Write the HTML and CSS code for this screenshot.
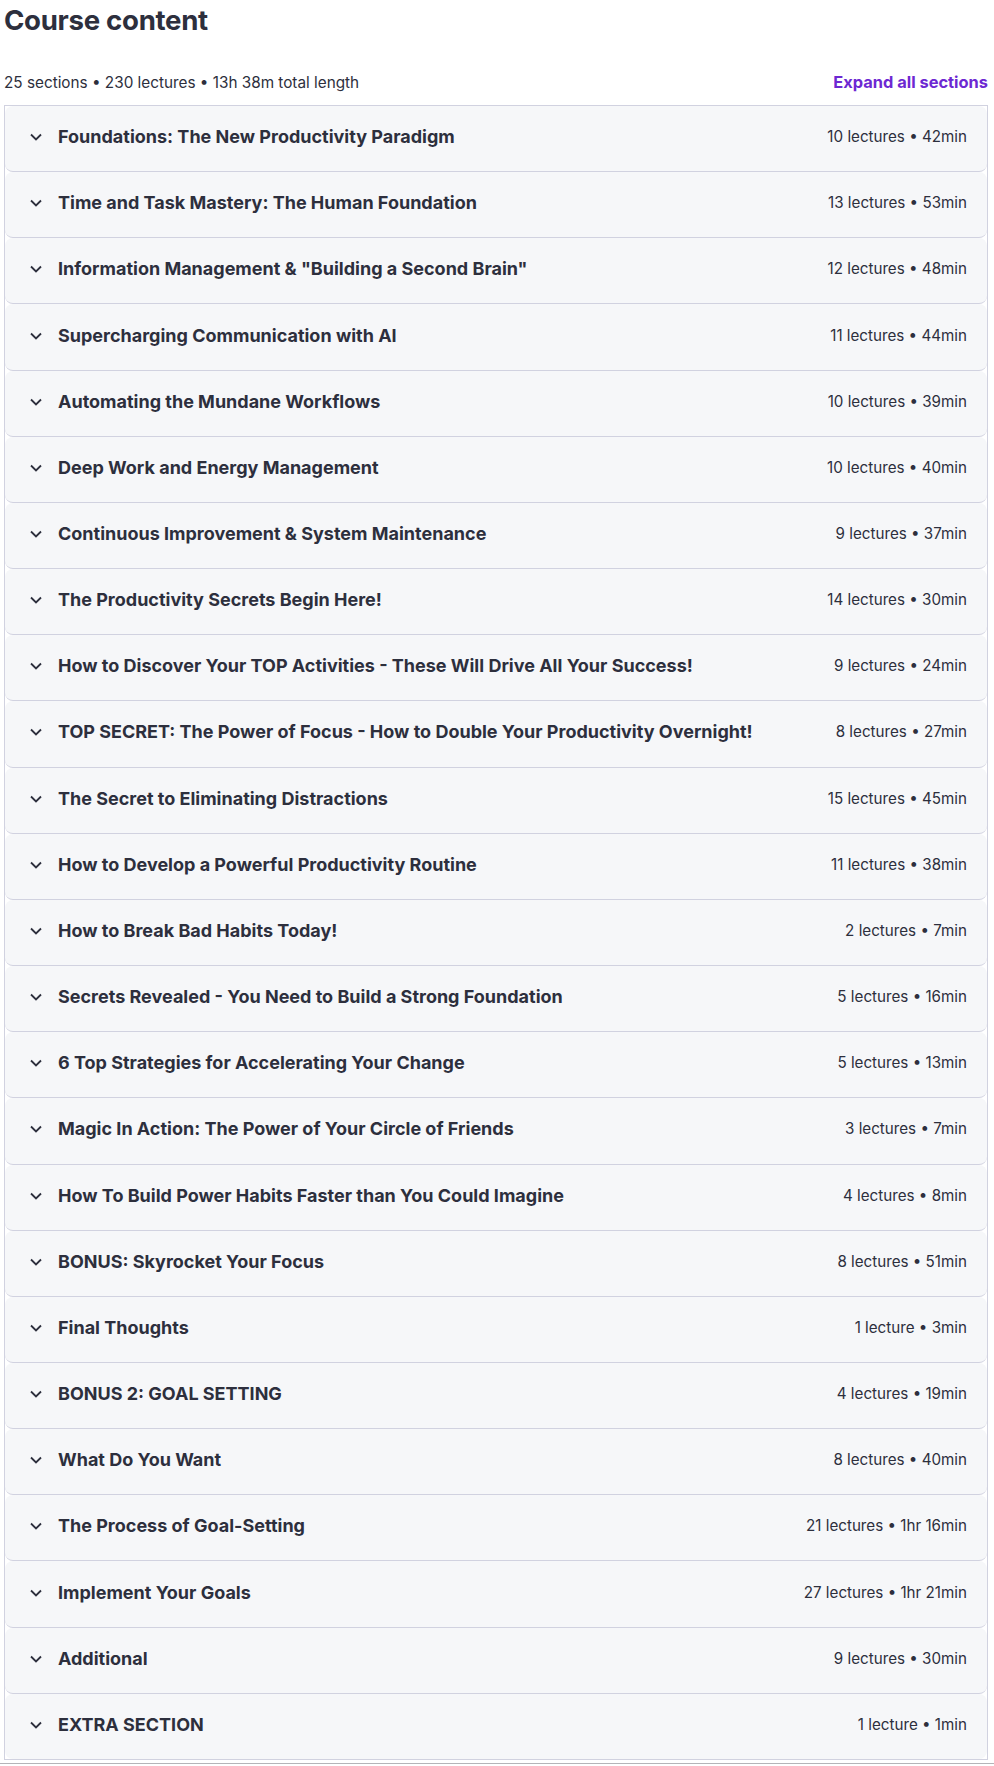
FILE: index.html
```html
<!DOCTYPE html>
<html>
  <head>
    <title>Course content</title>
    <link rel="stylesheet" href="styles.css">
  </head>
  <body>
    <div class="page">
      <h2 class="heading">Course content</h2>
      <div class="summary">
        <span>25 sections • 230 lectures • 13h 38m total length</span>
        <a class="expand-link" href="#">Expand all sections</a>
      </div>
      <div class="sections" id="sections"></div>
    </div>
    <div class="page-rule"></div>

    <script>
      // Section titles and their lecture counts / lengths
      var sections = [
        ["Foundations: The New Productivity Paradigm", "10 lectures • 42min"],
        ["Time and Task Mastery: The Human Foundation", "13 lectures • 53min"],
        ["Information Management & \"Building a Second Brain\"", "12 lectures • 48min"],
        ["Supercharging Communication with AI", "11 lectures • 44min"],
        ["Automating the Mundane Workflows", "10 lectures • 39min"],
        ["Deep Work and Energy Management", "10 lectures • 40min"],
        ["Continuous Improvement & System Maintenance", "9 lectures • 37min"],
        ["The Productivity Secrets Begin Here!", "14 lectures • 30min"],
        ["How to Discover Your TOP Activities - These Will Drive All Your Success!", "9 lectures • 24min"],
        ["TOP SECRET: The Power of Focus - How to Double Your Productivity Overnight!", "8 lectures • 27min"],
        ["The Secret to Eliminating Distractions", "15 lectures • 45min"],
        ["How to Develop a Powerful Productivity Routine", "11 lectures • 38min"],
        ["How to Break Bad Habits Today!", "2 lectures • 7min"],
        ["Secrets Revealed - You Need to Build a Strong Foundation", "5 lectures • 16min"],
        ["6 Top Strategies for Accelerating Your Change", "5 lectures • 13min"],
        ["Magic In Action: The Power of Your Circle of Friends", "3 lectures • 7min"],
        ["How To Build Power Habits Faster than You Could Imagine", "4 lectures • 8min"],
        ["BONUS: Skyrocket Your Focus", "8 lectures • 51min"],
        ["Final Thoughts", "1 lecture • 3min"],
        ["BONUS 2: GOAL SETTING", "4 lectures • 19min"],
        ["What Do You Want", "8 lectures • 40min"],
        ["The Process of Goal-Setting", "21 lectures • 1hr 16min"],
        ["Implement Your Goals", "27 lectures • 1hr 21min"],
        ["Additional", "9 lectures • 30min"],
        ["EXTRA SECTION", "1 lecture • 1min"]
      ];

      var list = document.getElementById("sections");
      var chevron =
        '<svg class="chevron" width="12" height="8" viewBox="0 0 12 8">' +
        '<path d="M1 1.5l5 5 5-5" fill="none" stroke="currentColor" stroke-width="1.8"/></svg>';

      sections.forEach(function (s) {
        var row = document.createElement("div");
        row.className = "section-row";
        row.innerHTML =
          chevron +
          '<span class="section-title"></span><span class="section-meta"></span>';
        row.querySelector(".section-title").textContent = s[0];
        row.querySelector(".section-meta").textContent = s[1];
        list.appendChild(row);
      });
    </script>
  </body>
</html>
```

FILE: styles.css
```css
body {
  margin: 0;
  font-family: Inter, "Noto Sans", Arial, sans-serif;
  color: #2d2f3d;
  background: #fff;
}
.page {
  padding: 0 6px 0 4px;
}
.heading {
  margin: 0;
  padding-top: 2px;
  font-size: 27.6px;
  font-weight: 700;
  line-height: 36px;
  letter-spacing: -0.3px;
}
.summary {
  display: flex;
  justify-content: space-between;
  align-items: center;
  margin-top: 31px;
  height: 26px;
  padding-bottom: 3px;
  font-size: 15.3px;
}
.expand-link {
  color: #6d28d2;
  font-size: 16.4px;
  font-weight: 700;
  text-decoration: none;
}
.sections {
  margin-top: 7px;
  border: 1px solid #d1d2e0;
}
.section-row {
  display: flex;
  align-items: center;
  box-sizing: border-box;
  height: 66.16px;
  padding: 0 20px 4px 25px;
  background: #f6f7f9;
  border-radius: 8px;
  border-bottom: 1px solid #d1d2e0;
}
.section-row:last-child {
  border-bottom: none;
  height: 65.16px;
}
.chevron {
  flex: none;
  margin-right: 16px;
  margin-top: 1px;
}
.section-title {
  flex: 1;
  font-size: 18px;
  font-weight: 700;
}
.section-meta {
  font-size: 15.2px;
}
.page-rule {
  margin-top: 3px;
  border-top: 1px solid #b4b4b8;
}
```
